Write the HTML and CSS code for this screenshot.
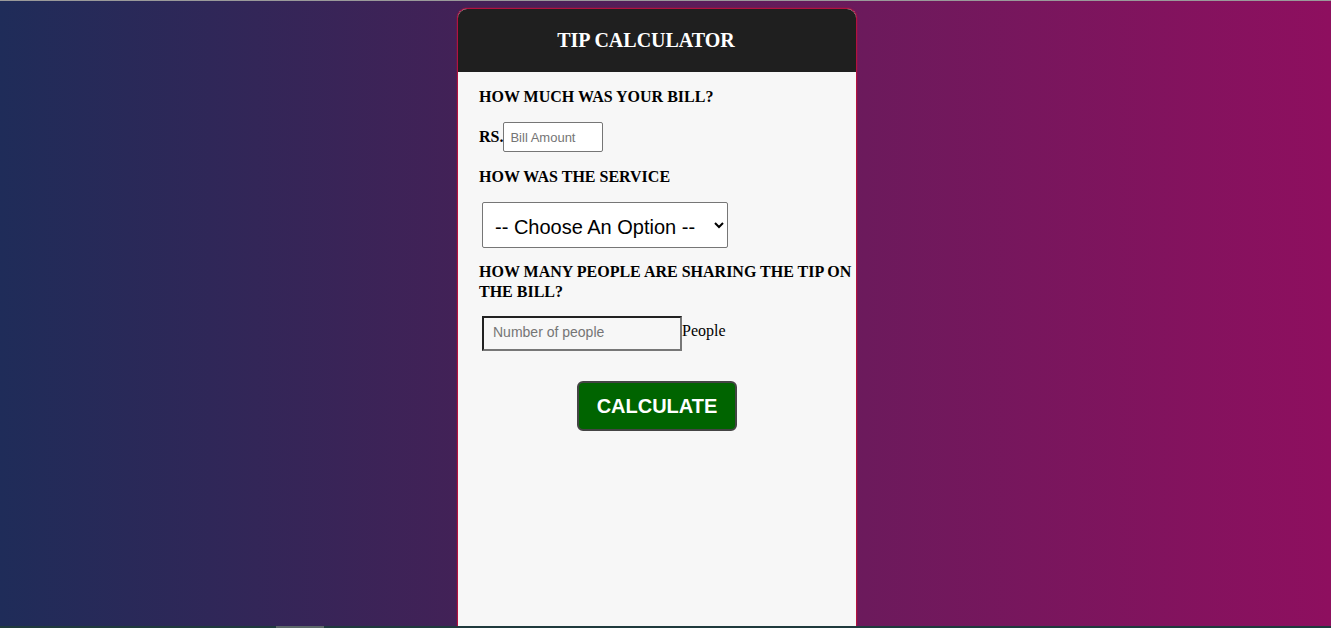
FILE: index.html
```html
<!DOCTYPE html>
<html>
<head>
<meta charset="utf-8">
<title>Tip Calculator</title>
<link rel="stylesheet" href="styles.css">
</head>
<body>
<div class="topline"></div>
<div class="page">
  <div class="card">
    <div class="header"><h1>TIP CALCULATOR</h1></div>
    <div class="body">
      <p class="label">HOW MUCH WAS YOUR BILL?</p>
      <div class="row bill"><span class="rs">RS.</span><input class="bill-input" type="text" placeholder="Bill Amount"></div>
      <p class="label label-low">HOW WAS THE SERVICE</p>
      <div class="row"><select class="service"><option>-- Choose An Option --</option></select></div>
      <p class="label label-low">HOW MANY PEOPLE ARE SHARING THE TIP ON THE BILL?</p>
      <div class="row people"><input class="people-input" type="text" placeholder="Number of people"><span class="people-text">People</span></div>
      <div class="btn-row"><button class="calc">CALCULATE</button></div>
    </div>
  </div>
</div>
<div class="bottombar"><div class="thumb"></div></div>
</body>
</html>
```
FILE: styles.css
```css
html, body { margin: 0; padding: 0; height: 100%; overflow: hidden; }
body {
  background: linear-gradient(to right, #1f2c59 0%, #432157 35%, #6c1a5c 65%, #8e0f5f 100%);
  font-family: "Liberation Serif", "Times New Roman", serif;
}
.topline { height: 1px; background: #9a9a9a; }
.page { display: flex; justify-content: center; padding-top: 7px; padding-right: 17px; }
.card {
  width: 398px;
  height: 640px;
  background: #f7f7f7;
  border: 1px solid #b3123f;
  border-radius: 10px;
  overflow: hidden;
  box-shadow: 0 0 2px rgba(200, 20, 60, 0.6);
}
.header {
  background: #1f1f1f;
  height: 63px;
  display: flex;
  align-items: center;
  justify-content: center;
  padding-right: 22px;
}
.header h1 {
  margin: 0;
  color: #fff;
  font-size: 20px;
  font-weight: bold;
}
.body { padding: 15px 0 0 21px; }
.label {
  margin: 0;
  font-size: 16px;
  font-weight: bold;
  line-height: 20px;
  color: #000;
}
.label-low { padding-top: 1px; }
.row { display: flex; align-items: center; }
.bill { margin-top: 15px; margin-bottom: 14px; }
.rs { font-size: 16px; font-weight: bold; }
.bill-input {
  width: 100px;
  height: 30px;
  box-sizing: border-box;
  border: 1px solid #767676;
  border-radius: 2px;
  padding: 1px 6px;
  font-family: "Liberation Sans", Arial, sans-serif;
  font-size: 13px;
  background: #fff;
  margin: 0;
}
.bill-input::placeholder { color: #757575; }
.service {
  margin: 15px 0 13px 3px;
  width: 246px;
  height: 46px;
  box-sizing: border-box;
  border: 1px solid #767676;
  border-radius: 2px;
  background: #fff;
  font-family: "Liberation Sans", Arial, sans-serif;
  font-size: 20px;
  padding: 4px 8px 0;
  color: #000;
}
.people { margin-top: 14px; }
.people-input {
  margin: 0 0 0 3px;
  width: 200px;
  height: 35px;
  box-sizing: border-box;
  border: 2px solid #767676;
  border-top-color: #222;
  border-left-color: #222;
  border-right-color: #777;
  border-bottom-color: #777;
  background: #f7f7f7;
  padding: 0 9px 4px;
  font-family: "Liberation Sans", Arial, sans-serif;
  font-size: 14px;
}
.people-input::placeholder { color: #757575; }
.people-text { font-size: 16px; margin-top: -5px; }
.btn-row { display: flex; justify-content: center; padding-right: 21px; margin-top: 30px; }
.calc {
  width: 160px;
  height: 50px;
  background: #006400;
  color: #fff;
  border: 2px solid #444;
  border-radius: 6px;
  font-family: "Liberation Sans", Arial, sans-serif;
  font-size: 20px;
  font-weight: bold;
  padding: 0;
}
.bottombar {
  position: fixed;
  left: 0; right: 0; bottom: 0;
  height: 2px;
  background: #1f3a3d;
}
.thumb { margin-left: 276px; width: 48px; height: 2px; background: #5b6868; }
```
